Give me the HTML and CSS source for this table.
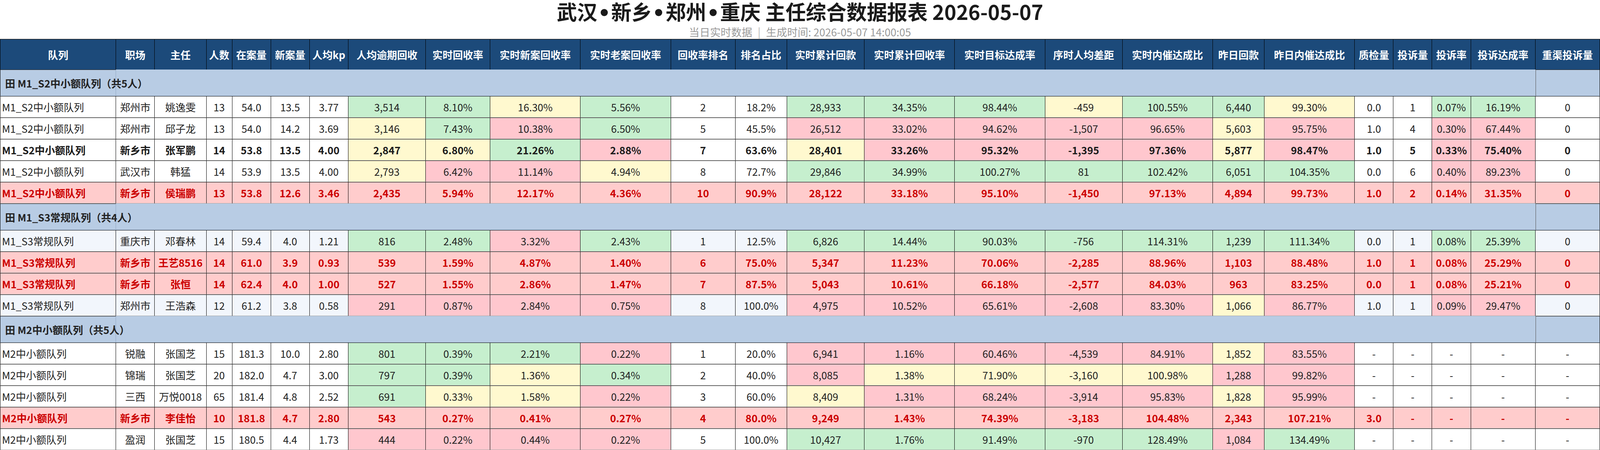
FILE: index.html
```html
<!DOCTYPE html>
<html lang="zh-CN">
<head>
<meta charset="utf-8">
<title>主任综合数据报表</title>
<link rel="stylesheet" href="styles.css">
</head>
<body>
<header class="head">
  <h1 class="title">武汉<span class="dot">•</span>新乡<span class="dot">•</span>郑州<span class="dot">•</span>重庆 主任综合数据报表 2026-05-07</h1>
  <div class="sub">当日实时数据<span class="sep">|</span>生成时间: 2026-05-07 14:00:05</div>
</header>
<table class="report">
  <colgroup>
    <col class="u9"><col class="u3"><col class="u4"><col class="u2"><col class="u3"><col class="u3"><col class="u3">
    <col class="u6"><col class="u5"><col class="u7"><col class="u7"><col class="u5"><col class="u4">
    <col class="u6"><col class="u7"><col class="u7"><col class="u6"><col class="u7"><col class="u4"><col class="u7">
    <col class="u3"><col class="u3"><col class="u3"><col class="u5"><col class="u5">
  </colgroup>
  <thead>
    <tr>
      <th class="first">队列</th><th>职场</th><th>主任</th><th>人数</th><th>在案量</th><th>新案量</th><th>人均kp</th>
      <th>人均逾期回收</th><th>实时回收率</th><th>实时新案回收率</th><th>实时老案回收率</th><th>回收率排名</th><th>排名占比</th>
      <th>实时累计回款</th><th>实时累计回收率</th><th>实时目标达成率</th><th>序时人均差距</th><th>实时内催达成比</th><th>昨日回款</th><th>昨日内催达成比</th>
      <th>质检量</th><th>投诉量</th><th>投诉率</th><th>投诉达成率</th><th class="last">重渠投诉量</th>
    </tr>
  </thead>
  <tbody>
    <tr class="grp"><td class="gname">田 M1_S2中小额队列（共5人）</td><td colspan="23"></td><td class="glast"></td></tr>
    <tr class="row">
      <td class="q">M1_S2中小额队列</td><td>郑州市</td><td>姚逸雯</td><td>13</td><td>54.0</td><td>13.5</td><td>3.77</td>
      <td class="g">3,514</td><td class="g">8.10%</td><td class="y">16.30%</td><td class="g">5.56%</td><td>2</td><td>18.2%</td>
      <td class="g">28,933</td><td class="g">34.35%</td><td class="g">98.44%</td><td class="y">-459</td><td class="g">100.55%</td><td class="g">6,440</td><td class="y">99.30%</td>
      <td>0.0</td><td>1</td><td class="g">0.07%</td><td class="g">16.19%</td><td class="z">0</td>
    </tr>
    <tr class="row">
      <td class="q">M1_S2中小额队列</td><td>郑州市</td><td>邱子龙</td><td>13</td><td>54.0</td><td>14.2</td><td>3.69</td>
      <td class="y">3,146</td><td class="g">7.43%</td><td class="r">10.38%</td><td class="g">6.50%</td><td>5</td><td>45.5%</td>
      <td class="r">26,512</td><td class="r">33.02%</td><td class="r">94.62%</td><td class="r">-1,507</td><td class="r">96.65%</td><td class="y">5,603</td><td class="r">95.75%</td>
      <td>1.0</td><td>4</td><td class="r">0.30%</td><td class="r">67.44%</td><td class="z">0</td>
    </tr>
    <tr class="row bd">
      <td class="q">M1_S2中小额队列</td><td>新乡市</td><td>张军鹏</td><td>14</td><td>53.8</td><td>13.5</td><td>4.00</td>
      <td class="y">2,847</td><td class="y">6.80%</td><td class="g">21.26%</td><td class="r">2.88%</td><td>7</td><td>63.6%</td>
      <td class="y">28,401</td><td class="r">33.26%</td><td class="r">95.32%</td><td class="r">-1,395</td><td class="r">97.36%</td><td class="y">5,877</td><td class="r">98.47%</td>
      <td>1.0</td><td>5</td><td class="r">0.33%</td><td class="r">75.40%</td><td class="z">0</td>
    </tr>
    <tr class="row">
      <td class="q">M1_S2中小额队列</td><td>武汉市</td><td>韩猛</td><td>14</td><td>53.9</td><td>13.5</td><td>4.00</td>
      <td class="y">2,793</td><td class="r">6.42%</td><td class="r">11.14%</td><td class="y">4.94%</td><td>8</td><td>72.7%</td>
      <td class="g">29,846</td><td class="g">34.99%</td><td class="g">100.27%</td><td class="g">81</td><td class="g">102.42%</td><td class="g">6,051</td><td class="g">104.35%</td>
      <td>0.0</td><td>6</td><td class="r">0.40%</td><td class="r">89.23%</td><td class="z">0</td>
    </tr>
    <tr class="row hl">
      <td class="q">M1_S2中小额队列</td><td>新乡市</td><td>侯瑞鹏</td><td>13</td><td>53.8</td><td>12.6</td><td>3.46</td>
      <td>2,435</td><td>5.94%</td><td>12.17%</td><td>4.36%</td><td>10</td><td>90.9%</td>
      <td>28,122</td><td>33.18%</td><td>95.10%</td><td>-1,450</td><td>97.13%</td><td>4,894</td><td>99.73%</td>
      <td>1.0</td><td>2</td><td>0.14%</td><td>31.35%</td><td class="z">0</td>
    </tr>

    <tr class="grp"><td class="gname">田 M1_S3常规队列（共4人）</td><td colspan="23"></td><td class="glast"></td></tr>
    <tr class="row alt">
      <td class="q">M1_S3常规队列</td><td>重庆市</td><td>邓春林</td><td>14</td><td>59.4</td><td>4.0</td><td>1.21</td>
      <td class="g">816</td><td class="g">2.48%</td><td class="r">3.32%</td><td class="g">2.43%</td><td>1</td><td>12.5%</td>
      <td class="g">6,826</td><td class="g">14.44%</td><td class="g">90.03%</td><td class="g">-756</td><td class="g">114.31%</td><td class="g">1,239</td><td class="g">111.34%</td>
      <td>0.0</td><td>1</td><td class="g">0.08%</td><td class="g">25.39%</td><td class="z">0</td>
    </tr>
    <tr class="row hl">
      <td class="q">M1_S3常规队列</td><td>新乡市</td><td>王艺8516</td><td>14</td><td>61.0</td><td>3.9</td><td>0.93</td>
      <td>539</td><td>1.59%</td><td>4.87%</td><td>1.40%</td><td>6</td><td>75.0%</td>
      <td>5,347</td><td>11.23%</td><td>70.06%</td><td>-2,285</td><td>88.96%</td><td>1,103</td><td>88.48%</td>
      <td>1.0</td><td>1</td><td>0.08%</td><td>25.29%</td><td class="z">0</td>
    </tr>
    <tr class="row hl">
      <td class="q">M1_S3常规队列</td><td>新乡市</td><td>张恒</td><td>14</td><td>62.4</td><td>4.0</td><td>1.00</td>
      <td>527</td><td>1.55%</td><td>2.86%</td><td>1.47%</td><td>7</td><td>87.5%</td>
      <td>5,043</td><td>10.61%</td><td>66.18%</td><td>-2,577</td><td>84.03%</td><td>963</td><td>83.25%</td>
      <td>0.0</td><td>1</td><td>0.08%</td><td>25.21%</td><td class="z">0</td>
    </tr>
    <tr class="row alt">
      <td class="q">M1_S3常规队列</td><td>郑州市</td><td>王浩森</td><td>12</td><td>61.2</td><td>3.8</td><td>0.58</td>
      <td class="r">291</td><td class="r">0.87%</td><td class="r">2.84%</td><td class="r">0.75%</td><td>8</td><td>100.0%</td>
      <td class="r">4,975</td><td class="r">10.52%</td><td class="r">65.61%</td><td class="r">-2,608</td><td class="r">83.30%</td><td class="y">1,066</td><td class="r">86.77%</td>
      <td>1.0</td><td>1</td><td class="r">0.09%</td><td class="r">29.47%</td><td class="z">0</td>
    </tr>

    <tr class="grp"><td class="gname">田 M2中小额队列（共5人）</td><td colspan="23"></td><td class="glast"></td></tr>
    <tr class="row">
      <td class="q">M2中小额队列</td><td>锐融</td><td>张国芝</td><td>15</td><td>181.3</td><td>10.0</td><td>2.80</td>
      <td class="g">801</td><td class="g">0.39%</td><td class="g">2.21%</td><td class="r">0.22%</td><td>1</td><td>20.0%</td>
      <td class="r">6,941</td><td class="r">1.16%</td><td class="r">60.46%</td><td class="r">-4,539</td><td class="r">84.91%</td><td class="y">1,852</td><td class="r">83.55%</td>
      <td>-</td><td>-</td><td>-</td><td>-</td><td class="z">-</td>
    </tr>
    <tr class="row">
      <td class="q">M2中小额队列</td><td>锦瑞</td><td>张国芝</td><td>20</td><td>182.0</td><td>4.7</td><td>3.00</td>
      <td class="g">797</td><td class="g">0.39%</td><td class="y">1.36%</td><td class="g">0.34%</td><td>2</td><td>40.0%</td>
      <td class="r">8,085</td><td class="y">1.38%</td><td class="y">71.90%</td><td class="y">-3,160</td><td class="y">100.98%</td><td class="r">1,288</td><td class="r">99.82%</td>
      <td>-</td><td>-</td><td>-</td><td>-</td><td class="z">-</td>
    </tr>
    <tr class="row">
      <td class="q">M2中小额队列</td><td>三西</td><td>万悦0018</td><td>65</td><td>181.4</td><td>4.8</td><td>2.52</td>
      <td class="g">691</td><td class="y">0.33%</td><td class="y">1.58%</td><td class="r">0.22%</td><td>3</td><td>60.0%</td>
      <td class="y">8,409</td><td class="r">1.31%</td><td class="r">68.24%</td><td class="r">-3,914</td><td class="r">95.83%</td><td class="y">1,828</td><td class="r">95.99%</td>
      <td>-</td><td>-</td><td>-</td><td>-</td><td class="z">-</td>
    </tr>
    <tr class="row hl">
      <td class="q">M2中小额队列</td><td>新乡市</td><td>李佳怡</td><td>10</td><td>181.8</td><td>4.7</td><td>2.80</td>
      <td>543</td><td>0.27%</td><td>0.41%</td><td>0.27%</td><td>4</td><td>80.0%</td>
      <td>9,249</td><td>1.43%</td><td>74.39%</td><td>-3,183</td><td>104.48%</td><td>2,343</td><td>107.21%</td>
      <td>3.0</td><td>-</td><td>-</td><td>-</td><td class="z">-</td>
    </tr>
    <tr class="row">
      <td class="q">M2中小额队列</td><td>盈润</td><td>张国芝</td><td>15</td><td>180.5</td><td>4.4</td><td>1.73</td>
      <td class="r">444</td><td class="r">0.22%</td><td class="r">0.44%</td><td class="r">0.22%</td><td>5</td><td>100.0%</td>
      <td class="g">10,427</td><td class="g">1.76%</td><td class="g">91.49%</td><td class="g">-970</td><td class="g">128.49%</td><td class="r">1,084</td><td class="g">134.49%</td>
      <td>-</td><td>-</td><td>-</td><td>-</td><td class="z">-</td>
    </tr>
  </tbody>
</table>
</body>
</html>
```

FILE: styles.css
```css
html, body {
  margin: 0;
  padding: 0;
  background: #ffffff;
  overflow: hidden;
}

body {
  font-family: "Microsoft YaHei", "Noto Sans CJK SC", "Noto Sans", sans-serif;
  color: #222222;
}

.head {
  height: 99px;
  border-bottom: 1px solid #c8c8c8;
  text-align: center;
}

.title {
  margin: 0;
  font-size: 52px;
  line-height: 58px;
  font-weight: 700;
  color: #1a1a1a;
}

.dot {
  font-family: "DejaVu Sans", sans-serif;
  padding: 0 0.02em;
}

.sub {
  margin-top: 2px;
  font-size: 27px;
  line-height: 36px;
  color: #9a9a9a;
}

.sep {
  margin: 0 14px;
  color: #b5b5b5;
}

.report {
  width: 100%;
  table-layout: fixed;
  border-collapse: separate;
  border-spacing: 0;
  font-size: 26px;
  color: #222222;
}

.u2 { width: 1.6129%; }
.u3 { width: 2.4194%; }
.u4 { width: 3.2258%; }
.u5 { width: 4.0323%; }
.u6 { width: 4.8387%; }
.u7 { width: 5.6452%; }
.u9 { width: 7.2581%; }

.report thead tr {
  height: 78px;
}

.report th {
  background: #1c4a7a;
  color: #ffffff;
  font-weight: 700;
  padding: 0;
  white-space: nowrap;
  text-align: center;
  border-top: 1px solid #000000;
  border-right: 1px solid #000000;
}

.report th.first {
  border-left: 1px solid #000000;
}

.report td {
  padding: 0 2px;
  text-align: center;
  white-space: nowrap;
  overflow: visible;
}

.row {
  height: 55px;
}

.row td {
  background: #ffffff;
  border-top: 1px solid #222222;
  border-bottom: 1px solid #a6a6a6;
  border-right: 1px solid #000000;
}

.row td.q {
  text-align: left;
  padding-left: 4px;
  border-left: 1px solid #000000;
}

.row.alt td {
  background: #f2f6fc;
}

.row td.g { background: #c6efce; }
.row td.y { background: #fff9cf; }
.row td.r { background: #ffc7ce; }

.row.bd td {
  font-weight: 700;
  color: #1a1a1a;
}

.row.hl td {
  background: #ffcccc;
  color: #cc0000;
  font-weight: 700;
}

.grp {
  height: 68px;
}

.grp td {
  background: #b8cce4;
  border-bottom: 1px solid #94a9c3;
}

.grp td.gname {
  text-align: left;
  padding-left: 12px;
  font-weight: 700;
  color: #222222;
  border-top: 1px solid #222222;
  border-left: 1px solid #000000;
  border-right: 1px solid #93a7c1;
}

.grp td.glast {
  border-top: 1px solid #222222;
  border-left: 1px solid #555555;
  border-right: 1px solid #000000;
}
```
